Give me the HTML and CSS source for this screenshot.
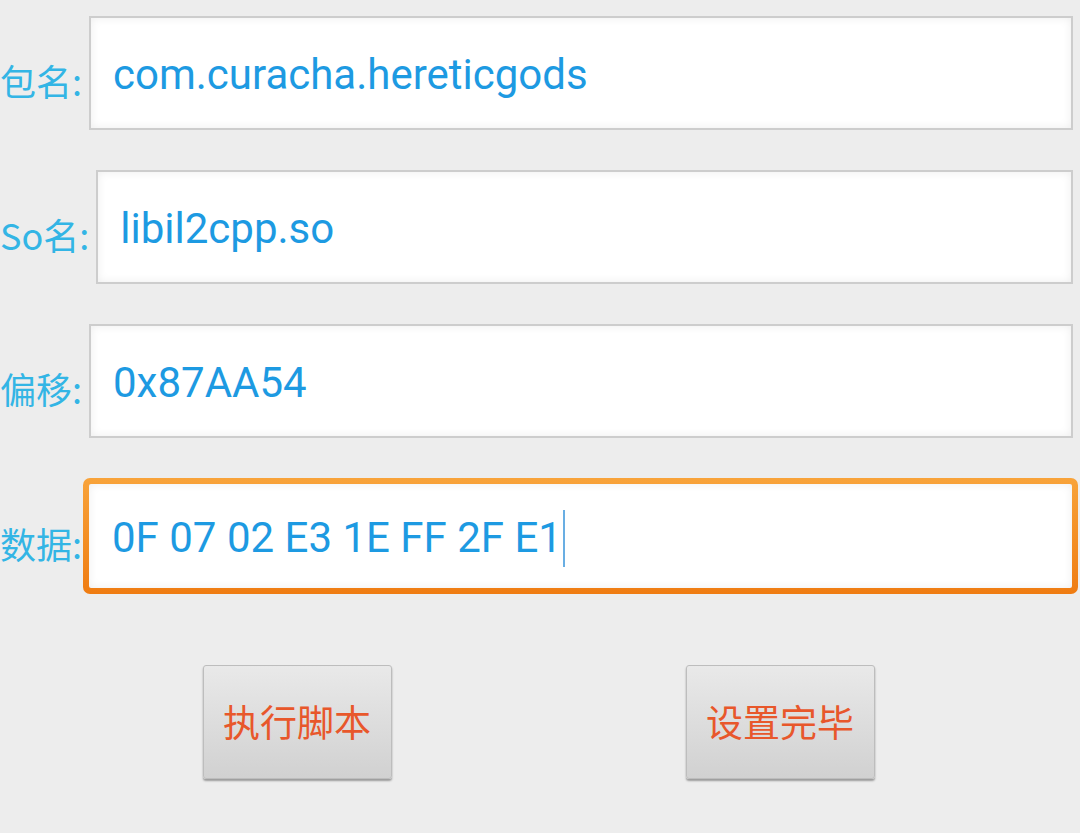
FILE: index.html
```html
<!DOCTYPE html>
<html lang="zh">
<head>
<meta charset="utf-8">
<link rel="stylesheet" href="styles.css">
<title>设置</title>
</head>
<body>
<div class="page">
  <div class="form">
    <div class="row">
      <span class="label">包名:</span>
      <div class="field"><span class="value">com.curacha.hereticgods</span></div>
    </div>
    <div class="row">
      <span class="label">So名:</span>
      <div class="field"><span class="value">libil2cpp.so</span></div>
    </div>
    <div class="row">
      <span class="label">偏移:</span>
      <div class="field"><span class="value">0x87AA54</span></div>
    </div>
    <div class="row row-focus">
      <span class="label">数据:</span>
      <div class="focus-ring">
        <div class="field field-focused"><span class="value">0F 07 02 E3 1E FF 2F E1</span><span class="caret"></span></div>
      </div>
    </div>
  </div>
  <div class="actions">
    <button class="btn">执行脚本</button>
    <button class="btn">设置完毕</button>
  </div>
</div>
</body>
</html>
```
FILE: styles.css
```css
html, body {
  margin: 0;
  padding: 0;
  background: #ededed;
  width: 1080px;
  height: 833px;
  overflow: hidden;
}

.page {
  padding-top: 16px;
}

.form {
  display: flex;
  flex-direction: column;
  gap: 40px;
  padding-right: 7px;
}

.row {
  display: flex;
  align-items: stretch;
  height: 114px;
}

.row-focus {
  height: 116px;
}

.label {
  align-self: center;
  padding-top: 14px;
  font-family: "Noto Sans CJK SC", "Noto Sans", sans-serif;
  font-size: 36px;
  line-height: 40px;
  color: #33b5e5;
  white-space: nowrap;
}

.field {
  flex: 1;
  margin-left: 7px;
  display: flex;
  align-items: center;
  box-sizing: border-box;
  border: 2px solid #cdcdcd;
  background: #fff;
  box-shadow: inset 0 0 10px rgba(0, 0, 0, 0.07);
  padding: 4px 0 0 22px;
}

.value {
  font-family: Roboto, "Noto Sans", sans-serif;
  font-size: 42px;
  line-height: 50px;
  color: #1d9ae2;
  white-space: nowrap;
}

.focus-ring {
  flex: 1;
  display: flex;
  margin-left: 1px;
  margin-right: -5px;
  padding: 6px;
  border-radius: 7px;
  background: linear-gradient(#f8a33a, #ef7c12);
  box-sizing: border-box;
}

.field-focused {
  margin-left: 0;
  border: none;
  border-radius: 2px;
  padding-left: 23px;
}

.caret {
  display: inline-block;
  width: 2px;
  height: 57px;
  margin-left: 1px;
  background: #69aee3;
}

.actions {
  display: flex;
  justify-content: center;
  gap: 294px;
  margin-top: 71px;
  padding-right: 3px;
}

.btn {
  width: 189px;
  height: 114px;
  box-sizing: border-box;
  border: 1px solid #bdbdbd;
  border-radius: 3px;
  background: linear-gradient(#e9e9e9, #d1d1d1);
  box-shadow: 0 2px 2px rgba(0, 0, 0, 0.35);
  font-family: "Noto Sans CJK SC", "Noto Sans", sans-serif;
  font-size: 37px;
  color: #e8572b;
  padding: 0 0 3px 0;
  margin: 0;
}
```
